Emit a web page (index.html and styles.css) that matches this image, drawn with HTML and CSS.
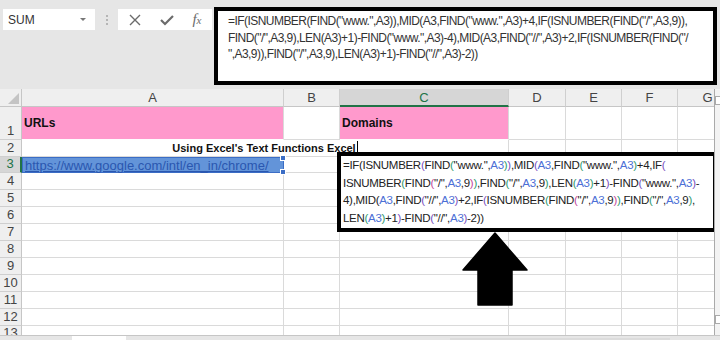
FILE: index.html
```html
<!DOCTYPE html>
<html lang="en">

<head>
    <meta charset="UTF-8">
    <title>Extract domain - Excel</title>
    <link rel="stylesheet" href="styles.css">
</head>

<body>
    <div class="toolbar">
        <div class="name-box">
            <span>SUM</span>
            <span class="name-arrow"></span>
        </div>
        <div class="grip">
            <span></span><span></span><span></span>
        </div>
        <div class="fx-buttons">
            <svg width="14" height="14" viewBox="0 0 14 14"><path d="M2 2 L12 12 M12 2 L2 12" stroke="#6b6b6b" stroke-width="1.4" fill="none"/></svg>
            <svg width="16" height="14" viewBox="0 0 16 14"><path d="M2 7 L6 11 L14 3" stroke="#6b6b6b" stroke-width="2.2" fill="none"/></svg>
            <span class="fx">f<i>x</i></span>
        </div>
        <div class="formula-bar">
            <div>=IF(ISNUMBER(FIND("www.",A3)),MID(A3,FIND("www.",A3)+4,IF(ISNUMBER(FIND("/",A3,9)),</div>
            <div>FIND("/",A3,9),LEN(A3)+1)-FIND("www.",A3)-4),MID(A3,FIND("//",A3)+2,IF(ISNUMBER(FIND("/</div>
            <div>",A3,9)),FIND("/",A3,9),LEN(A3)+1)-FIND("//",A3)-2))</div>
        </div>
    </div>

    <div class="sheet">
        <div class="grid-wrap">
            <div class="grid">
                <!-- column headers -->
                <div class="corner"><span></span></div>
                <div class="col-head">A</div>
                <div class="col-head">B</div>
                <div class="col-head active">C</div>
                <div class="col-head">D</div>
                <div class="col-head">E</div>
                <div class="col-head">F</div>
                <div class="col-head">G</div>

                <!-- row 1 -->
                <div class="row-head">1</div>
                <div class="cell pink bold">URLs</div>
                <div class="cell"></div>
                <div class="cell pink bold">Domains</div>
                <div class="cell"></div>
                <div class="cell"></div>
                <div class="cell"></div>
                <div class="cell"></div>

                <!-- row 2 -->
                <div class="row-head">2</div>
                <div class="cell merged bold">Using Excel's Text Functions Excel<span class="caret"></span></div>
                <div class="cell"></div>
                <div class="cell"></div>
                <div class="cell"></div>
                <div class="cell"></div>

                <!-- row 3 -->
                <div class="row-head active">3</div>
                <div class="cell selected"><span class="link">https://www.google.com/intl/en_in/chrome/</span></div>
                <div class="cell"></div>
                <div class="cell"></div>
                <div class="cell"></div>
                <div class="cell"></div>
                <div class="cell"></div>
                <div class="cell"></div>
            </div>
            <div class="grid" id="emptyRows"></div>

            <div class="cell-formula">
                <div>=IF<span class="p1">(</span>ISNUMBER<span class="p2">(</span>FIND<span class="p3">(</span>"www.",<span class="ref">A3</span><span class="p3">)</span><span class="p2">)</span>,MID<span class="p2">(</span><span class="ref">A3</span>,FIND<span class="p3">(</span>"www.",<span class="ref">A3</span><span class="p3">)</span>+4,IF<span class="p2">(</span></div>
                <div>ISNUMBER<span class="p3">(</span>FIND<span class="p4">(</span>"/",<span class="ref">A3</span>,9<span class="p4">)</span><span class="p3">)</span>,FIND<span class="p3">(</span>"/",<span class="ref">A3</span>,9<span class="p3">)</span>,LEN<span class="p3">(</span><span class="ref">A3</span><span class="p3">)</span>+1<span class="p2">)</span>-FIND<span class="p2">(</span>"www.",<span class="ref">A3</span><span class="p2">)</span>-</div>
                <div>4<span class="p1">)</span>,MID<span class="p1">(</span><span class="ref">A3</span>,FIND<span class="p2">(</span>"//",<span class="ref">A3</span><span class="p2">)</span>+2,IF<span class="p2">(</span>ISNUMBER<span class="p3">(</span>FIND<span class="p4">(</span>"/",<span class="ref">A3</span>,9<span class="p4">)</span><span class="p3">)</span>,FIND<span class="p3">(</span>"/",<span class="ref">A3</span>,9<span class="p3">)</span>,</div>
                <div>LEN<span class="p3">(</span><span class="ref">A3</span><span class="p3">)</span>+1<span class="p2">)</span>-FIND<span class="p2">(</span>"//",<span class="ref">A3</span><span class="p2">)</span>-2<span class="p1">)</span>)</div>
            </div>

            <svg class="arrow" width="66" height="75" viewBox="0 0 66 75">
                <path d="M33 1 L65 38 L50 38 L50 73 L16 73 L16 38 L1 38 Z" fill="#000" stroke="#000" stroke-linejoin="round" stroke-width="1.5"/>
            </svg>
        </div>
        <div class="vscroll">
            <span class="sb-box"></span>
            <span class="sb-box"></span>
        </div>
    </div>

    <div class="tabs">
        <div class="tab"></div>
        <div class="hscroll"></div>
    </div>

    <script>
        // rows 4 to 13 are empty, build them instead of writing them out
        var rows = document.getElementById('emptyRows');
        for (var r = 4; r <= 13; r++) {
            var html = '<div class="row-head">' + r + '</div>';
            for (var c = 0; c < 7; c++) {
                html += '<div class="cell"></div>';
            }
            rows.insertAdjacentHTML('beforeend', html);
        }
    </script>
</body>

</html>
```

FILE: styles.css
```css
body {
    margin: 0;
    width: 720px;
    height: 340px;
    overflow: hidden;
    background-color: #e6e6e6;
    font-family: "Liberation Sans", Arial, sans-serif;
    color: #222;
}

/* formula toolbar */
.toolbar {
    height: 89px;
    display: flex;
    align-items: flex-start;
    padding: 7px 0 0 3px;
    box-sizing: border-box;
}

.name-box {
    width: 92px;
    height: 21px;
    margin-top: 2px;
    background: #fff;
    display: flex;
    align-items: center;
    justify-content: space-between;
    padding: 0 9px 0 5px;
    box-sizing: border-box;
    font-size: 12px;
    color: #333;
}

.name-arrow {
    width: 0;
    height: 0;
    border-left: 3px solid transparent;
    border-right: 3px solid transparent;
    border-top: 3px solid #777;
}

.grip {
    width: 23px;
    height: 21px;
    margin-top: 2px;
    display: flex;
    flex-direction: column;
    align-items: center;
    justify-content: center;
    gap: 2px;
}

.grip span {
    width: 2px;
    height: 2px;
    background: #b5b5b5;
}

.fx-buttons {
    width: 94px;
    height: 21px;
    margin-top: 2px;
    background: #fff;
    display: flex;
    align-items: center;
    justify-content: space-around;
    padding: 0 2px;
    box-sizing: border-box;
}

.fx {
    font-family: "Liberation Serif", "Times New Roman", serif;
    font-style: italic;
    font-size: 15px;
    color: #6b6b6b;
}

.fx i {
    font-size: 11px;
}

.formula-bar {
    width: 503px;
    height: 78px;
    margin-left: 2px;
    background: #fff;
    border: 4px solid #000;
    box-sizing: border-box;
    padding: 2px 0 0 10px;
    font-size: 12px;
    letter-spacing: -0.55px;
    line-height: 16.5px;
    white-space: nowrap;
    overflow: hidden;
    color: #333;
}

/* sheet */
.sheet {
    display: flex;
    height: 246px;
}

.grid-wrap {
    position: relative;
    width: 715px;
    height: 246px;
    overflow: hidden;
    background: #fff;
}

.grid {
    display: grid;
    grid-template-columns: 22px 262px 56px 169px 57px 56px 56px 60px;
    grid-auto-rows: 16.9px;
    width: 738px;
}

.grid:first-child {
    grid-template-rows: 18px 33px 16.6px 16.9px;
}

.corner {
    background: #efefef;
    border-right: 1px solid #c6c6c6;
    border-bottom: 1px solid #c6c6c6;
    position: relative;
}

.corner span {
    position: absolute;
    right: 2px;
    bottom: 2px;
    width: 0;
    height: 0;
    border-left: 11px solid transparent;
    border-bottom: 11px solid #c4c4c4;
}

.col-head {
    background: #efefef;
    border-right: 1px solid #cfcfcf;
    border-bottom: 1px solid #c6c6c6;
    font-size: 13px;
    color: #444;
    text-align: center;
    line-height: 17px;
}

.col-head.active {
    background: #d6d6d6;
    border-bottom: 2px solid #217346;
    color: #217346;
}

.row-head {
    background: #efefef;
    border-right: 1px solid #c6c6c6;
    border-bottom: 1px solid #cfcfcf;
    font-size: 13px;
    color: #444;
    display: flex;
    align-items: flex-end;
    justify-content: center;
    line-height: 16px;
}

.row-head.active {
    background: #d6d6d6;
    color: #217346;
    border-right: 2px solid #217346;
}

.cell {
    border-right: 1px solid #dadada;
    border-bottom: 1px solid #dadada;
    font-size: 13px;
    display: flex;
    align-items: center;
    padding-left: 2px;
    white-space: nowrap;
    overflow: visible;
    min-width: 0;
}

.pink {
    background: #ff99cc;
    border-bottom: 1px solid #fff;
}

.bold {
    font-weight: bold;
    font-size: 12px;
    color: #111;
}

.merged {
    grid-column: span 3;
    justify-content: center;
    padding-left: 0;
    font-size: 11px;
}

.caret {
    display: inline-block;
    width: 1px;
    height: 13px;
    margin-left: 1px;
    background: #000;
}

.selected {
    position: relative;
    background: #6394d9;
    border: 1px solid #3b6dc5;
    box-sizing: border-box;
}

.selected::before,
.selected::after {
    content: "";
    position: absolute;
    right: -3px;
    width: 4px;
    height: 4px;
    background: #3b6dc5;
    border: 1px solid #fff;
}

.selected::before {
    top: -3px;
}

.selected::after {
    bottom: -3px;
}

.link {
    color: #2a57b0;
    text-decoration: underline;
    font-size: 13px;
}

/* black note box over the sheet */
.cell-formula {
    position: absolute;
    left: 337px;
    top: 63px;
    width: 380px;
    height: 80px;
    background: #fff;
    border: 4px solid #000;
    box-sizing: border-box;
    padding: 1px 0 0 2px;
    font-size: 11.5px;
    letter-spacing: -0.3px;
    line-height: 17.5px;
    white-space: nowrap;
    overflow: hidden;
    color: #222;
}

.ref {
    color: #4c6fd6;
}

.p1 {
    color: #222;
}

.p2 {
    color: #7a4fc0;
}

.p3 {
    color: #2f9a6e;
}

.p4 {
    color: #c2469a;
}

.arrow {
    position: absolute;
    left: 462px;
    top: 143px;
}

.vscroll {
    width: 5px;
    background: #f3f3f3;
    border-left: 1px solid #aaa;
    display: flex;
    flex-direction: column;
    justify-content: space-between;
    padding: 7px 0 11px;
}

.sb-box {
    display: block;
    height: 7px;
    border: 1px solid #aaa;
    border-right: none;
    background: #fff;
}

/* sheet tabs */
.tabs {
    height: 5px;
    display: flex;
    border-top: 1px solid #c6c6c6;
    overflow: hidden;
}

.tab {
    margin-left: 72px;
    width: 54px;
    background: #fff;
}

.hscroll {
    margin: 2px 0 0 324px;
    width: 220px;
    height: 3px;
    background: #dcdcdc;
}
```
